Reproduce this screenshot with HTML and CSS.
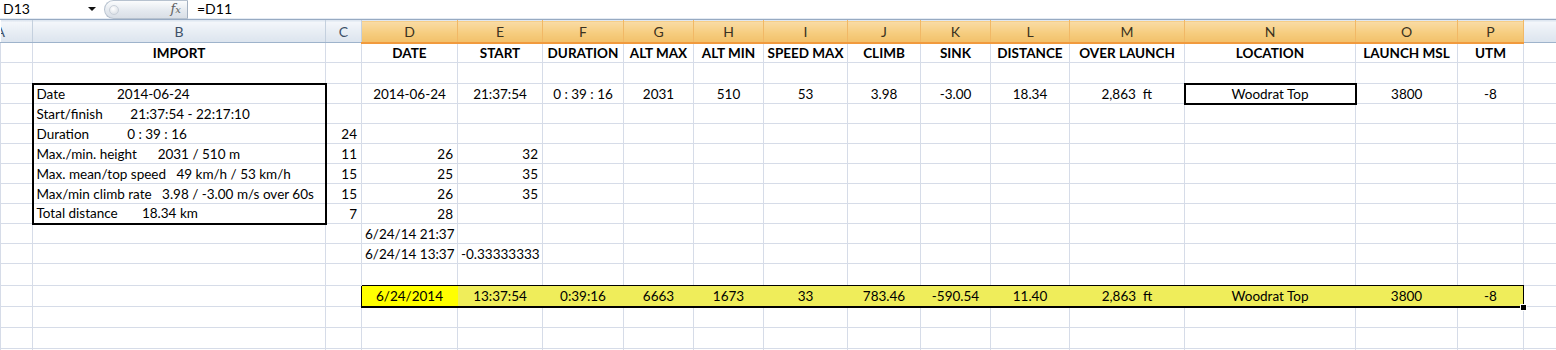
FILE: index.html
```html
<!DOCTYPE html>
<html>
<head>
<meta charset="utf-8">
<link rel="stylesheet" href="styles.css">
</head>
<body>
<div class="fbar">
  <div class="namebox"><span>D13</span><span class="dd"></span></div>
  <div class="fxpill"><span class="knob"></span><span class="fx"><i>f</i><i class="x">x</i></span></div>
  <div class="formula">=D11</div>
</div>
<table class="sheet">
  <colgroup>
    <col><col><col><col><col><col><col><col><col><col><col><col><col><col><col><col><col>
  </colgroup>
  <thead>
    <tr>
      <th class="ca">A</th><th>B</th><th>C</th>
      <th class="sel">D</th><th class="sel">E</th><th class="sel">F</th><th class="sel">G</th><th class="sel">H</th><th class="sel">I</th><th class="sel">J</th><th class="sel">K</th><th class="sel">L</th><th class="sel">M</th><th class="sel">N</th><th class="sel">O</th><th class="sel">P</th>
      <th></th>
    </tr>
  </thead>
  <tbody>
    <tr class="hd">
      <td></td><td class="c">IMPORT</td><td></td>
      <td class="c">DATE</td><td class="c">START</td><td class="c">DURATION</td><td class="c">ALT MAX</td><td class="c">ALT MIN</td><td class="c">SPEED MAX</td><td class="c">CLIMB</td><td class="c">SINK</td><td class="c">DISTANCE</td><td class="c">OVER LAUNCH</td><td class="c">LOCATION</td><td class="c">LAUNCH MSL</td><td class="c">UTM</td><td></td>
    </tr>
    <tr class="r21">
      <td></td><td></td><td></td><td></td><td></td><td></td><td></td><td></td><td></td><td></td><td></td><td></td><td></td><td></td><td></td><td></td><td></td>
    </tr>
    <tr>
      <td></td><td class="bx bx-t">Date               2014-06-24</td><td></td>
      <td class="c">2014-06-24</td><td class="c">21:37:54</td><td class="c">0 : 39 : 16</td><td class="c">2031</td><td class="c">510</td><td class="c">53</td><td class="c">3.98</td><td class="c">-3.00</td><td class="c">18.34</td><td class="c">2,863  ft</td><td class="c loc">Woodrat Top</td><td class="c">3800</td><td class="c">-8</td><td></td>
    </tr>
    <tr>
      <td></td><td class="bx">Start/finish        21:37:54 - 22:17:10</td><td></td><td></td><td></td><td></td><td></td><td></td><td></td><td></td><td></td><td></td><td></td><td></td><td></td><td></td><td></td>
    </tr>
    <tr>
      <td></td><td class="bx">Duration           0 : 39 : 16</td><td class="r">24</td><td></td><td></td><td></td><td></td><td></td><td></td><td></td><td></td><td></td><td></td><td></td><td></td><td></td><td></td>
    </tr>
    <tr>
      <td></td><td class="bx">Max./min. height      2031 / 510 m</td><td class="r">11</td><td class="r">26</td><td class="r">32</td><td></td><td></td><td></td><td></td><td></td><td></td><td></td><td></td><td></td><td></td><td></td><td></td>
    </tr>
    <tr>
      <td></td><td class="bx">Max. mean/top speed   49 km/h / 53 km/h</td><td class="r">15</td><td class="r">25</td><td class="r">35</td><td></td><td></td><td></td><td></td><td></td><td></td><td></td><td></td><td></td><td></td><td></td><td></td>
    </tr>
    <tr>
      <td></td><td class="bx">Max/min climb rate   3.98 / -3.00 m/s over 60s</td><td class="r">15</td><td class="r">26</td><td class="r">35</td><td></td><td></td><td></td><td></td><td></td><td></td><td></td><td></td><td></td><td></td><td></td><td></td>
    </tr>
    <tr>
      <td></td><td class="bx bx-b">Total distance       18.34 km</td><td class="r">7</td><td class="r">28</td><td></td><td></td><td></td><td></td><td></td><td></td><td></td><td></td><td></td><td></td><td></td><td></td><td></td>
    </tr>
    <tr>
      <td></td><td></td><td></td><td class="r">6/24/14 21:37</td><td></td><td></td><td></td><td></td><td></td><td></td><td></td><td></td><td></td><td></td><td></td><td></td><td></td>
    </tr>
    <tr>
      <td></td><td></td><td></td><td class="r">6/24/14 13:37</td><td class="r">-0.33333333</td><td></td><td></td><td></td><td></td><td></td><td></td><td></td><td></td><td></td><td></td><td></td><td></td>
    </tr>
    <tr class="r22">
      <td></td><td></td><td></td><td class="ab"></td><td class="ab"></td><td class="ab"></td><td class="ab"></td><td class="ab"></td><td class="ab"></td><td class="ab"></td><td class="ab"></td><td class="ab"></td><td class="ab"></td><td class="ab"></td><td class="ab"></td><td class="ab"></td><td></td>
    </tr>
    <tr class="r21">
      <td></td><td></td><td class="lb"></td>
      <td class="c yy">6/24/2014</td><td class="c y">13:37:54</td><td class="c y">0:39:16</td><td class="c y">6663</td><td class="c y">1673</td><td class="c y">33</td><td class="c y">783.46</td><td class="c y">-590.54</td><td class="c y">11.40</td><td class="c y">2,863  ft</td><td class="c y">Woodrat Top</td><td class="c y">3800</td><td class="c y y-end">-8<span class="handle"></span></td>
      <td></td>
    </tr>
    <tr class="r21">
      <td></td><td></td><td></td><td></td><td></td><td></td><td></td><td></td><td></td><td></td><td></td><td></td><td></td><td></td><td></td><td></td><td></td>
    </tr>
    <tr class="r21">
      <td></td><td></td><td></td><td></td><td></td><td></td><td></td><td></td><td></td><td></td><td></td><td></td><td></td><td></td><td></td><td></td><td></td>
    </tr>
    <tr class="r21">
      <td></td><td></td><td></td><td></td><td></td><td></td><td></td><td></td><td></td><td></td><td></td><td></td><td></td><td></td><td></td><td></td><td></td>
    </tr>
  </tbody>
</table>
</body>
</html>
```
FILE: styles.css
```css
* { box-sizing: border-box; }
html, body { margin: 0; padding: 0; background: #fff; }
body {
  width: 1556px;
  height: 350px;
  overflow: hidden;
  font-family: Lato, "Open Sans", sans-serif;
  font-size: 14px;
  color: #000;
}

/* formula bar */
.fbar {
  display: flex;
  align-items: stretch;
  height: 20px;
  border-bottom: 1px solid #97aac2;
  box-shadow: inset 0 -1px 0 #e4ebf4;
}
.namebox {
  width: 104px;
  display: flex;
  align-items: center;
  padding-left: 3px;
  padding-bottom: 2px;
}
.dd {
  margin-left: auto;
  margin-right: 8px;
  width: 0;
  height: 0;
  border-left: 4px solid transparent;
  border-right: 4px solid transparent;
  border-top: 4px solid #111;
}
.fxpill {
  width: 84px;
  height: 19px;
  display: flex;
  align-items: center;
  padding-left: 4px;
  border: 1px solid #b7c2cf;
  border-right-color: #a3b0c0;
  border-radius: 10px 0 0 10px;
  background: linear-gradient(#fbfcfd, #e3e8ee 60%, #d9dfe6);
}
.knob {
  width: 10px;
  height: 10px;
  border-radius: 50%;
  border: 1px solid #c9d0d9;
  background: radial-gradient(circle at 40% 35%, #ffffff, #d3d9e0);
}
.fx {
  margin-left: auto;
  margin-right: 6px;
  font-family: "DejaVu Serif", "Liberation Serif", serif;
  font-size: 13px;
  color: #606060;
  padding-bottom: 2px;
}
.fx .x { font-size: 10px; }
.formula {
  display: flex;
  align-items: center;
  padding-left: 9px;
  padding-bottom: 2px;
}

/* sheet */
.sheet {
  border-collapse: collapse;
  table-layout: fixed;
  width: 1556px;
}
.sheet col:nth-child(1) { width: 32px; }
.sheet col:nth-child(2) { width: 293px; }
.sheet col:nth-child(3) { width: 36px; }
.sheet col:nth-child(4) { width: 96px; }
.sheet col:nth-child(5) { width: 85px; }
.sheet col:nth-child(6) { width: 81px; }
.sheet col:nth-child(7) { width: 70px; }
.sheet col:nth-child(8) { width: 70px; }
.sheet col:nth-child(9) { width: 84px; }
.sheet col:nth-child(10) { width: 73px; }
.sheet col:nth-child(11) { width: 70px; }
.sheet col:nth-child(12) { width: 79px; }
.sheet col:nth-child(13) { width: 115px; }
.sheet col:nth-child(14) { width: 171px; }
.sheet col:nth-child(15) { width: 102px; }
.sheet col:nth-child(16) { width: 66px; }
.sheet col:nth-child(17) { width: 33px; }

.sheet th {
  height: 22px;
  padding: 0;
  font-weight: normal;
  font-size: 14px;
  color: #3e5068;
  background: linear-gradient(#f4f7fb, #e6ecf3 55%, #dce4ee);
  border-top: 1px solid #dfe7f1;
  border-right: 1px solid #c4d0de;
  border-bottom: 1px solid #9eb3cb;
  overflow: hidden;
  white-space: nowrap;
}
.sheet th.ca { text-align: left; text-indent: -5px; }
.sheet th.sel {
  color: #3b3220;
  background: linear-gradient(#f9dca6, #f6cd7f 55%, #f2c06a);
  border-right-color: #f1b866;
  border-bottom: 2px solid #f19a3d;
}

.sheet td {
  height: 20px;
  padding: 0 3px;
  font-size: 13.5px;
  border: 1px solid #d6dce8;
  white-space: pre;
  overflow: hidden;
  line-height: 18px;
  vertical-align: middle;
}
.sheet tr.r21 td { height: 21px; }
.sheet tr.r22 td { height: 22px; }
.sheet .c { text-align: center; }
.sheet .r { text-align: right; padding-right: 4px; }
.sheet tr.hd td { font-weight: bold; }

.sheet td.bx { border-left: 2px solid #000; border-right: 2px solid #000; }
.sheet td.bx-t { border-top: 2px solid #000; }
.sheet td.bx-b { border-bottom: 2px solid #000; }
.sheet td.loc { border: 2px solid #000; }

.sheet td.ab { border-bottom-color: #000; }
.sheet td.lb { border-right-color: #000; }
.sheet td.y, .sheet td.yy {
  background: #efed5a;
  border-right-color: #efed5a;
  border-bottom: 2px solid #000;
}
.sheet td.yy { background: #ffff00; border-right-color: #ffff00; }
.sheet td.y-end {
  position: relative;
  overflow: visible;
  border-right-color: #000;
}
.handle {
  position: absolute;
  right: -4px;
  bottom: -5px;
  width: 7px;
  height: 7px;
  background: #000;
  border: 1px solid #fff;
}
```
